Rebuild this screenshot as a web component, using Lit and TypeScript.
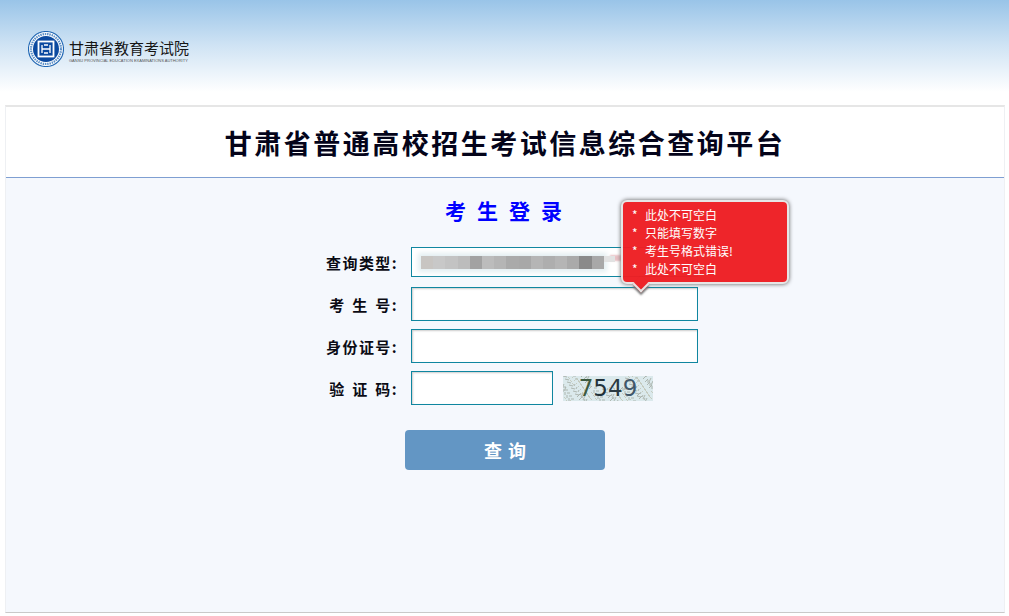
import { LitElement, html, css, svg } from "lit";
import { customElement } from "lit/decorators.js";

const BLUR = ["#c8c5c2","#c8c8c8","#c3c3c3","#bcbcbc","#a2a2a2","#bcbcbc","#b5b5b5","#aaaaaa","#a8a8a8","#b5b5b5","#aeaeae","#b5b5b5","#aaaaaa","#8a8a8a","#a8a8a8"];
const DIGITS: [string, string][] = [["7", "#3d5a40"], ["5", "#22323a"], ["4", "#2a3a42"], ["9", "#42586a"]];

const noise = Array.from({ length: 190 }, (_, i) => {
  const x = (i * 37) % 91, y = (i * 23) % 26, dx = ((i * 13) % 9) - 4, dy = ((i * 7) % 9) - 4;
  const mid = x > 28 && x < 62 && y < 12;
  return mid ? null : svg`<path d="M${x} ${y}l${dx} ${dy}" stroke="${i % 3 ? "#a3aaa2" : "#c0c4b6"}" stroke-width="1" opacity=".8"/>`;
});

@customElement("app-root")
export class AppRoot extends LitElement {
  static styles = css`
    :host { display: block; height: 616px; overflow: hidden; background: #fff; font-family: "SimSun", "Noto Sans CJK SC", "DejaVu Sans", sans-serif; }
    .header { height: 105px; background: linear-gradient(#99c4e8 0, #cfe3f4 45px, #fff 92px); display: flex; align-items: flex-start; padding: 31px 0 0 28px; box-sizing: border-box; gap: 5px; }
    .logo-text { display: flex; flex-direction: column; margin-top: 8px; color: #161616; }
    .logo-cn { font-size: 15px; line-height: 18px; width: 120px; white-space: nowrap; }
    .logo-en { font: 4px/6px "Liberation Sans", sans-serif; color: #555; white-space: nowrap; margin-top: 1px; }
    .card { margin: 0 4px 0 5px; height: 508px; border-top: 2px solid #e6e6e6; border-left: 1px solid #eef0f3; border-right: 1px solid #eef0f3; border-bottom: 1px solid #c9c9c9; background: #f5f8fd; box-sizing: border-box; display: flex; flex-direction: column; }
    .title { height: 71px; flex: none; background: #fff; border-bottom: 1px solid #7f9fd2; box-sizing: border-box; display: flex; align-items: center; justify-content: center; font-size: 27px; font-weight: 700; color: #04041a; letter-spacing: 2.5px; }
    .sub { margin-top: 19px; height: 26px; line-height: 26px; text-align: center; font-size: 21px; font-weight: 700; color: #0000ff; letter-spacing: 11px; text-indent: 8px; }
    .form { position: relative; width: 400px; margin: 24px auto 0; display: flex; flex-direction: column; gap: 8px; }
    .row { display: flex; align-items: center; gap: 13px; }
    .row.first { margin-bottom: 2px; }
    .label { width: 93px; flex: none; text-align: right; font-size: 15px; font-weight: 700; color: #0b0b14; letter-spacing: 1.4px; white-space: nowrap; }
    .label.wide { word-spacing: 1.8px; }
    .box { height: 34px; width: 287px; box-sizing: border-box; border: 1px solid #0f86a0; background: #fff; box-shadow: inset 1px 1px 2px #ccc; padding: 0; display: block; }
    .box.short { width: 142px; }
    .select { position: relative; height: 30px; box-shadow: none; display: flex; align-items: center; padding-left: 9px; }
    .blur { height: 13px; display: flex; box-shadow: 0 0 5px 3px #e3eef1; background: #e3eef1; }
    .blur i { width: 12.2px; height: 100%; display: block; }
    .tail { width: 11px; height: 6px; align-self: flex-start; margin-top: 8px; background: #e2e2e2; box-shadow: 6px -1px 2px 0 #e8c0c4; }
    .chev { position: absolute; right: 2px; top: 10px; }
    .captcha { margin-left: -3px; width: 90px; height: 25px; position: relative; display: flex; align-items: center; justify-content: center; background: #dbe9ec; font: 23px/25px "DejaVu Sans", sans-serif; }
    .captcha svg { position: absolute; inset: 0; }
    .captcha span { position: relative; }
    .btn { display: block; width: 200px; height: 40px; margin: 17px 0 0 100px; border: 0; border-radius: 4px; background: #6396c4; color: #fff; font: 700 18px "SimSun", "Noto Sans CJK SC", sans-serif; letter-spacing: 6px; text-indent: 6px; padding: 0; }
    .tip { position: absolute; left: 316px; top: -47px; width: 168px; height: 84px; box-sizing: border-box; background: #ee1f24; border: 2px solid #e6e6e6; border-radius: 6px; box-shadow: 0 0 4px #555; color: #fff; font-size: 12px; line-height: 18px; padding: 4px 0 0 9px; opacity: .97; }
    .tip div { white-space: nowrap; position: relative; }
    .tip b { font-weight: 400; display: inline-block; width: 13px; }
    .arrow { position: absolute; left: 12px; bottom: -8px; width: 12px; height: 12px; box-sizing: border-box; background: #ee1f24; border-right: 2px solid #e6e6e6; border-bottom: 2px solid #e6e6e6; transform: rotate(45deg); box-shadow: 2px 2px 2px #777; }
  `;

  render() {
    return html`
      <div class="header">
        <svg width="36" height="36" viewBox="0 0 36 36">
          <circle cx="18" cy="18" r="17.5" fill="#fff" stroke="#1f66b3" stroke-width="1.1"/>
          <circle cx="18" cy="18" r="15" fill="none" stroke="#5f92c9" stroke-width="2.2" stroke-dasharray="1.5 .8"/>
          <circle cx="18" cy="18" r="13" fill="#0c4aa0"/>
          <rect x="10.5" y="10.5" width="15" height="15" fill="#0c4aa0" stroke="#fff" stroke-width="1.8"/>
          <path d="M14 14v8M22 14v8M14 18h8M16 14h4M16 22h4" stroke="#fff" stroke-width="1.3" fill="none"/>
        </svg>
        <div class="logo-text">
          <div class="logo-cn">甘肃省教育考试院</div>
          <div class="logo-en">GANSU PROVINCIAL EDUCATION EXAMINATIONS AUTHORITY</div>
        </div>
      </div>
      <div class="card">
        <div class="title">甘肃省普通高校招生考试信息综合查询平台</div>
        <div class="sub">考生登录</div>
        <div class="form">
          <div class="row first">
            <div class="label">查询类型:</div>
            <div class="box select">
              <div class="blur">${BLUR.map((c) => html`<i style="background:${c}"></i>`)}</div>
              <div class="tail"></div>
              <svg class="chev" width="10" height="8" viewBox="0 0 10 8"><path d="M1 2l4 4 4-4" fill="none" stroke="#666" stroke-width="1.5"/></svg>
            </div>
          </div>
          <div class="row"><div class="label wide">考&nbsp;生&nbsp;号:</div><input class="box" /></div>
          <div class="row"><div class="label">身份证号:</div><input class="box" /></div>
          <div class="row">
            <div class="label wide">验&nbsp;证&nbsp;码:</div><input class="box short" />
            <div class="captcha">
              <svg width="90" height="25">${noise}</svg>
              <span>${DIGITS.map(([d, c]) => html`<span style="color:${c}">${d}</span>`)}</span>
            </div>
          </div>
          <button class="btn">查询</button>
          <div class="tip">
            <div><b>*</b>此处不可空白</div>
            <div><b>*</b>只能填写数字</div>
            <div><b>*</b>考生号格式错误!</div>
            <div><b>*</b>此处不可空白</div>
            <span class="arrow"></span>
          </div>
        </div>
      </div>
    `;
  }
}
